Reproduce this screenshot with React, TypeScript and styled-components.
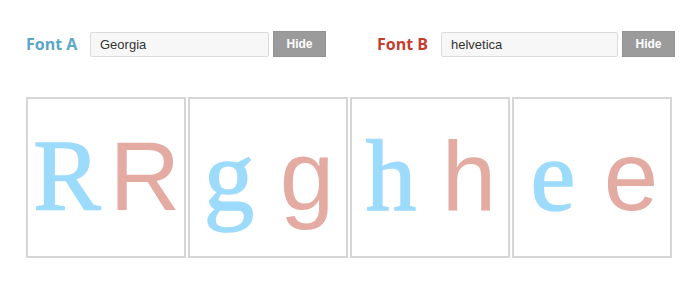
import React from "react";
import styled, { createGlobalStyle } from "styled-components";

const Global = createGlobalStyle`
  html, body { margin: 0; padding: 0; background: #fff; }
  body { font-family: "Liberation Sans", Arial, sans-serif; }
`;

const Page = styled.div`
  padding: 31px 25px 0 26px;
  width: 700px;
  box-sizing: border-box;
`;

const Header = styled.div`
  display: grid;
  grid-template-columns: 300px 298px;
  column-gap: 51px;
`;

const Group = styled.div`
  display: flex;
  align-items: center;
  height: 26px;
`;

const Label = styled.div<{ $color: string }>`
  width: 64px;
  flex: none;
  font-family: "Open Sans", sans-serif;
  font-weight: 700;
  font-size: 16px;
  color: ${(p) => p.$color};
  line-height: 26px;
`;

const Input = styled.input`
  flex: 1;
  min-width: 0;
  height: 25px;
  margin-top: 1px;
  box-sizing: border-box;
  border: 1px solid #dcdcdc;
  border-radius: 2px;
  background: #f7f7f7;
  padding: 0 9px;
  font-family: "Liberation Sans", Arial, sans-serif;
  font-size: 13px;
  color: #333;
  outline: none;
`;

const Button = styled.button`
  flex: none;
  width: 53px;
  height: 26px;
  margin-left: 4px;
  border: 1px solid #939393;
  background: #9b9b9b;
  color: #fff;
  font-family: "Liberation Sans", Arial, sans-serif;
  font-weight: 700;
  font-size: 12px;
  padding: 0;
  cursor: pointer;
`;

const Samples = styled.div`
  display: flex;
  gap: 2px;
  margin-top: 40px;
`;

const Box = styled.div`
  width: 160px;
  height: 161px;
  box-sizing: border-box;
  border: 2px solid #d6d6d6;
  display: grid;
  grid-template-columns: 1fr 1fr;
  align-items: baseline;
  align-content: center;
  justify-items: center;
  padding-bottom: 2px;
`;

const Glyph = styled.span<{ $kind: "a" | "b" }>`
  font-family: ${(p) =>
    p.$kind === "a"
      ? '"Liberation Serif", serif'
      : '"Liberation Sans", Arial, sans-serif'};
  font-size: ${(p) => (p.$kind === "a" ? "101px" : "98px")};
  line-height: 1;
  color: ${(p) => (p.$kind === "a" ? "#9ddbfd" : "#e4aba3")};
  -webkit-text-stroke: ${(p) => (p.$kind === "a" ? "1.5px #9ddbfd" : "0")};
`;

const letters = ["R", "g", "h", "e"];

export default function App() {
  return (
    <>
      <Global />
      <Page>
        <Header>
          <Group>
            <Label $color="#5ba6c8">Font A</Label>
            <Input defaultValue="Georgia" />
            <Button>Hide</Button>
          </Group>
          <Group>
            <Label $color="#c33e2f">Font B</Label>
            <Input defaultValue="helvetica" />
            <Button>Hide</Button>
          </Group>
        </Header>
        <Samples>
          {letters.map((l) => (
            <Box key={l}>
              <Glyph $kind="a">{l}</Glyph>
              <Glyph $kind="b">{l}</Glyph>
            </Box>
          ))}
        </Samples>
      </Page>
    </>
  );
}
